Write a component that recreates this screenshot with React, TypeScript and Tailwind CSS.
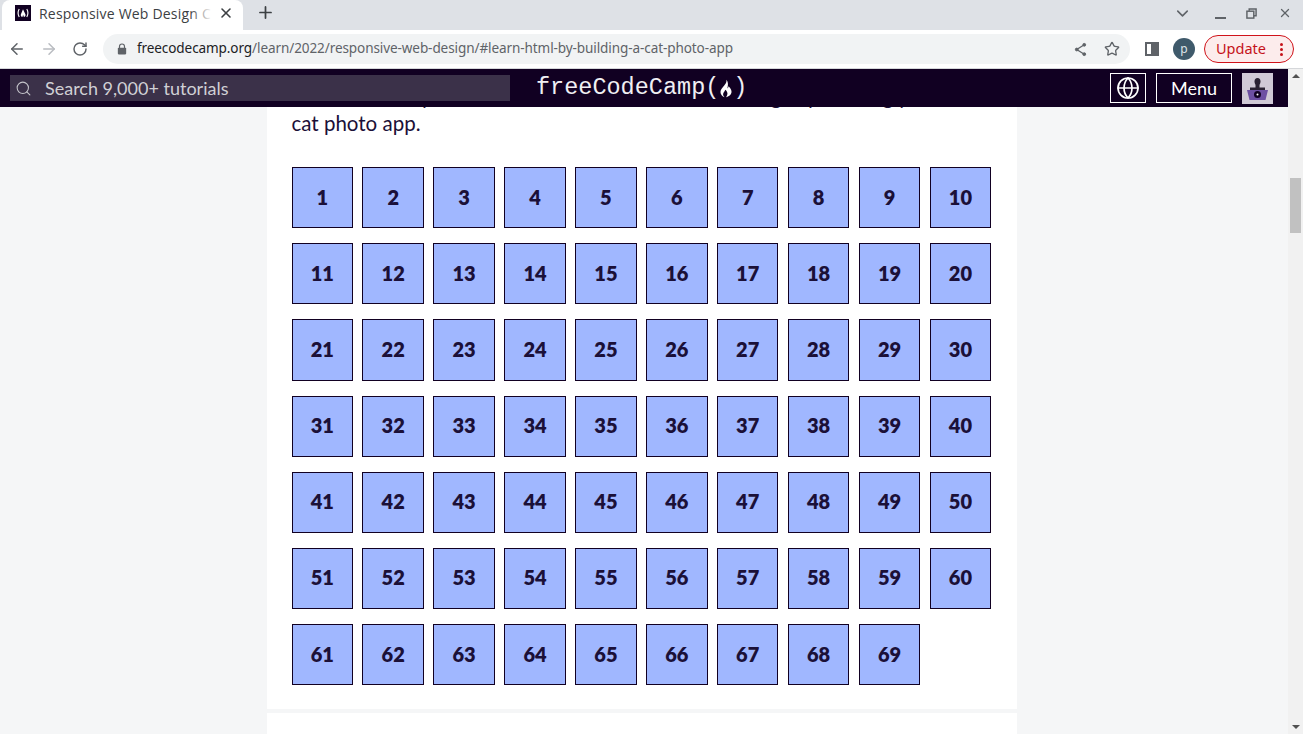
import React from "react";
import { ArrowLeft, ArrowRight, RotateCw, Star, X, Plus, ChevronDown, Search, Globe } from "lucide-react";

const nums = Array.from({ length: 69 }, (_, i) => i + 1);

function Flame({ className, fill = "#fff" }: { className?: string; fill?: string }) {
  return (
    <svg viewBox="0 0 20 24" className={className}>
      <path
        fill={fill}
        d="M10.500 1c.6 3.200-.9 4.900-3 7.600C5.500 11 3 13.400 3 16.500c0 3.400 2.400 5.700 5.200 6.500-1.500-1.500-2.200-3-1.700-4.700.5-1.700 2-2.800 2.600-4.800 1.700 1.300 2.600 3 2.700 4.600.1 1.900-.7 3.500-1.700 4.900 3-.7 6.900-3 6.900-6.900 0-3.100-2.500-5.200-3.700-6.900-.2 1.300-.7 2.200-1.600 2.800C12.600 8.400 13.300 4.300 10.500 1z"
      />
    </svg>
  );
}

function TabStrip() {
  return (
    <div className="h-[30px] bg-[#dee1e6] flex items-start shrink-0">
      <div className="relative ml-[2px] w-[241px] h-[30px] bg-white rounded-t-lg flex items-center pl-[13px] pb-[4px]">
        <div className="w-4 h-4 bg-[#110022] shrink-0 flex items-center justify-center">
          <svg viewBox="0 0 16 16" className="w-4 h-4" fill="none" stroke="#fff" strokeWidth="1.100">
            <path d="M4.200 4C2.800 6.500 2.800 9.500 4.200 12" />
            <path d="M11.800 4c1.400 2.500 1.400 5.500 0 8" />
            <path d="M8 4.200 5.800 9.500c-.3 1.300.6 2.300 1.600 2.500l.7-2.200.8 2.200c1-.2 1.900-1.200 1.600-2.500z" fill="#fff" stroke="none" />
          </svg>
        </div>
        <span className="ml-2 text-[14px] text-[#3c4043] whitespace-nowrap overflow-hidden w-[172px] font-['Open_Sans',sans-serif] tracking-[0.2px]">
          Responsive Web Design Course
        </span>
        <div className="absolute left-[188px] top-0 w-[22px] h-[30px] bg-gradient-to-r from-transparent to-white" />
        <X className="absolute left-[216px] top-[5px] w-4 h-4 text-[#3c4043]" strokeWidth={2.4} />
      </div>
      <Plus className="ml-[13px] mt-[3px] w-[19px] h-[19px] text-[#3c4043]" strokeWidth={2.2} />
      <div className="ml-auto h-[26px] flex items-center text-[#5f6368]">
        <ChevronDown className="w-[19px] h-[19px] mr-[23px]" strokeWidth={2} />
        <span className="w-[11px] h-[2px] bg-[#5f6368] mt-[10px] mr-[20px]" />
        <svg viewBox="0 0 12 12" className="w-[11px] h-[11px] mr-[21px]" fill="none" stroke="#5f6368" strokeWidth="1.600">
          <rect x="1" y="3.500" width="7.500" height="7.500" />
          <path d="M3.500 3V1h7.500v7.500H8.500" />
        </svg>
        <X className="w-[14px] h-[14px] mr-[11px]" strokeWidth={2.2} />
      </div>
    </div>
  );
}

function Toolbar() {
  return (
    <div className="h-[38px] bg-white border-b border-[#d5d7da] flex items-center shrink-0 box-content">
      <ArrowLeft className="ml-[8px] w-[18px] h-[18px] text-[#5f6368]" strokeWidth={2} />
      <ArrowRight className="ml-[14px] w-[18px] h-[18px] text-[#b9bcc1]" strokeWidth={2} />
      <RotateCw className="ml-[14px] w-[16px] h-[16px] text-[#5f6368]" strokeWidth={2.2} />
      <div className="ml-[15px] w-[1027px] h-[30px] rounded-full bg-[#f1f3f4] flex items-center">
        <svg viewBox="0 0 12 14" className="ml-[14px] w-[10px] h-[12px]" fill="#5f6368">
          <rect x="1" y="5.500" width="10" height="8" rx="1" />
          <path d="M3 6V4a3 3 0 0 1 6 0v2" fill="none" stroke="#5f6368" strokeWidth="1.400" />
        </svg>
        <span className="ml-[10px] mb-[2px] text-[13.550px] tracking-[-0.1px] whitespace-nowrap font-['Noto_Sans',sans-serif] text-[#5f6368]">
          <span className="text-[#202124]">freecodecamp.org</span>/learn/2022/responsive-web-design/#learn-html-by-building-a-cat-photo-app
        </span>
        <svg viewBox="0 0 16 16" className="ml-auto w-[15px] h-[15px]" fill="#5f6368" stroke="#5f6368">
          <path d="M12 3 4 8l8 5" fill="none" strokeWidth="1.400" />
          <circle cx="12" cy="3" r="1.500" />
          <circle cx="4" cy="8" r="1.500" />
          <circle cx="12" cy="13" r="1.500" />
        </svg>
        <Star className="ml-[16px] mr-[10px] w-[16px] h-[16px] text-[#5f6368]" strokeWidth={2} />
      </div>
      <div className="ml-[15px] w-[14px] h-[14px] border-2 border-[#5f6368] flex justify-end">
        <div className="w-[6px] h-full bg-[#5f6368]" />
      </div>
      <div className="ml-[14px] w-[22px] h-[22px] rounded-full bg-[#3f5a6b] text-[#dfe5e9] text-[12px] flex items-center justify-center font-['Noto_Sans',sans-serif]">
        p
      </div>
      <div className="ml-[9px] w-[90px] h-[28px] rounded-full border border-[#d0131a] bg-[#fcecec] flex items-center text-[#c5121a] pl-[11px] font-['Noto_Sans',sans-serif] text-[14.500px] pb-[1px]">
        Update
        <span className="ml-auto mr-[10px] mt-[1px] flex flex-col gap-[2px]">
          <span className="w-[3px] h-[3px] rounded-full bg-[#c5121a]" />
          <span className="w-[3px] h-[3px] rounded-full bg-[#c5121a]" />
          <span className="w-[3px] h-[3px] rounded-full bg-[#c5121a]" />
        </span>
      </div>
    </div>
  );
}

function Nav() {
  return (
    <div className="h-[38px] bg-[#110022] flex items-center shrink-0">
      <div className="ml-[10px] w-[500px] h-[26px] bg-[#3b3149] flex items-center text-[#d0d0d5]">
        <Search className="ml-[5px] w-[17px] h-[17px] text-[#c4c4ca]" strokeWidth={1.500} />
        <span className="ml-[13px] text-[18px] font-['Lato',sans-serif]">Search 9,000+ tutorials</span>
      </div>
      <div className="ml-[26px] flex items-center text-[#f0eff3] text-[23.500px] leading-none font-['Liberation_Mono',monospace]">
        <span>freeCodeCamp(</span>
        <Flame className="w-[16px] h-[19px] -ml-[1px] -mr-[1px]" />
        <span>)</span>
      </div>
      <div className="ml-auto w-[36px] h-[30px] border border-white flex items-center justify-center text-white">
        <Globe className="w-[24px] h-[24px]" strokeWidth={1.700} />
      </div>
      <div className="ml-[10px] w-[76px] h-[30px] border border-white flex items-center justify-center text-white text-[18px] font-['Lato',sans-serif]">
        Menu
      </div>
      <div className="ml-[10px] mr-[15px] w-[31px] h-[31px] bg-[#d0c9d6] overflow-hidden">
        <svg viewBox="0 0 31 31" className="w-full h-full">
          <ellipse cx="15.500" cy="8.500" rx="3" ry="3.500" fill="#2a2233" />
          <rect x="13.500" y="9" width="4" height="6" fill="#2a2233" />
          <path d="M8 14.500h15v2.500H8z" fill="#2a2233" />
          <path d="M5 17h21l-2.500 10h-16z" fill="#6d4fa3" />
          <circle cx="15.500" cy="21.500" r="3.500" fill="#110022" />
          <circle cx="15.500" cy="21.500" r="1" fill="#fff" />
        </svg>
      </div>
    </div>
  );
}

export default function App() {
  return (
    <div className="w-[1303px] h-[734px] overflow-hidden flex flex-col bg-white">
      <TabStrip />
      <Toolbar />
      <div className="flex flex-1 min-h-0">
        <div className="flex-1 flex flex-col min-w-0">
          <Nav />
          <div className="flex-1 min-h-0 bg-[#f5f6f7] overflow-hidden flex justify-center">
            <div className="w-[750px] ml-[-4px] bg-white flex flex-col px-[24.500px] overflow-hidden">
              <div className="-mt-[24px] text-[20.500px] leading-[27px] text-[#1b1038] font-['Lato',sans-serif] whitespace-nowrap">
                <p>In this course, you'll learn the most common HTML tags by building your own</p>
                <p>cat photo app.</p>
              </div>
              <div className="mt-[30.100px] w-[699.700px] grid grid-cols-10 gap-x-[9.300px] gap-y-[15.070px]">
                {nums.map((n) => (
                  <div
                    key={n}
                    className="h-[61.100px] bg-[#a0b7ff] border border-[#110022] flex items-center justify-center pb-[2px] text-[#1b1038] text-[20px] font-extrabold font-['Lato',sans-serif]"
                  >
                    {n}
                  </div>
                ))}
              </div>
              <div className="mt-[24px] h-[4px] bg-[#f5f6f7] -mx-[24.500px] shrink-0" />
            </div>
          </div>
        </div>
        <div className="w-[15px] bg-[#f1f1f1] flex flex-col items-center shrink-0">
          <div className="mt-[5px] w-0 h-0 border-l-[4px] border-r-[4px] border-b-[4px] border-l-transparent border-r-transparent border-b-[#505050]" />
          <div className="mt-[100px] w-[11px] h-[55px] bg-[#c1c1c1]" />
          <div className="mt-auto mb-[5px] w-0 h-0 border-l-[4px] border-r-[4px] border-t-[4px] border-l-transparent border-r-transparent border-t-[#505050]" />
        </div>
      </div>
    </div>
  );
}
